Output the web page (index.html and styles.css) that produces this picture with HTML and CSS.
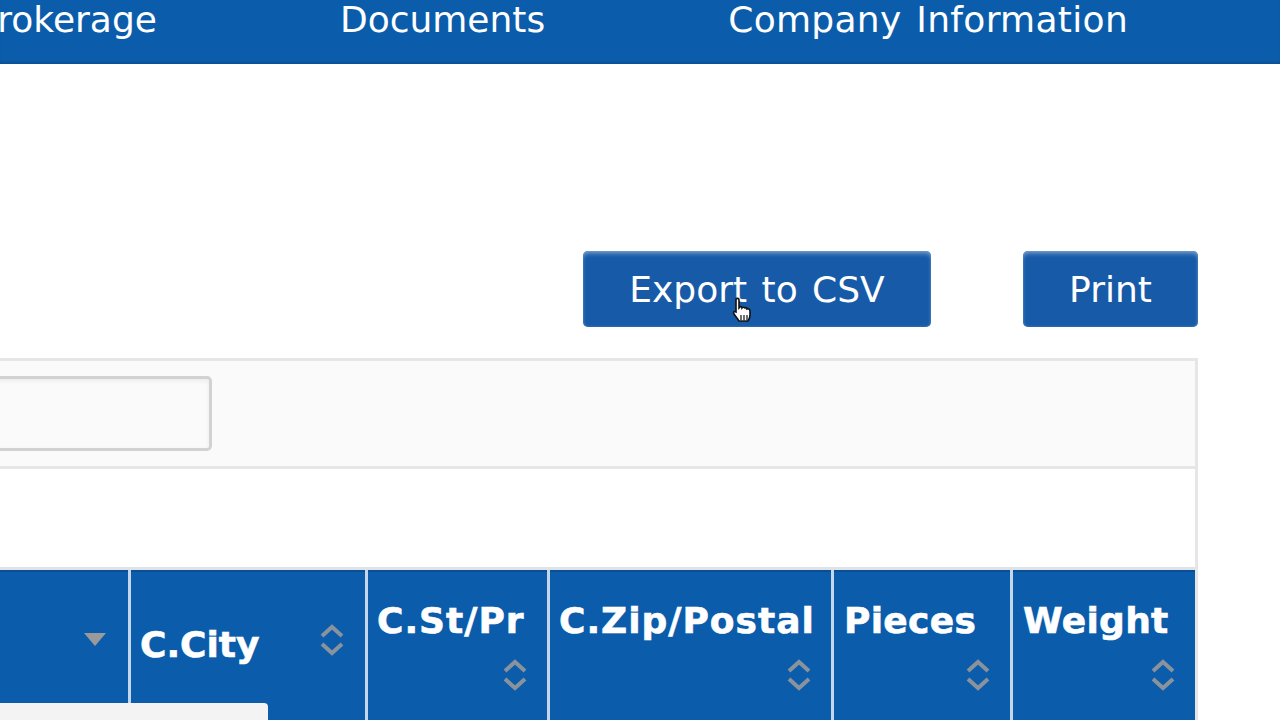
FILE: index.html
```html
<!DOCTYPE html>
<html lang="en">

<head>
    <meta charset="UTF-8">
    <title>Shipments</title>
    <link rel="stylesheet" href="styles.css">
</head>

<body>
    <nav class="topnav">
        <a class="nav-link">Brokerage</a>
        <a class="nav-link">Documents</a>
        <a class="nav-link nav-company">Company Information</a>
    </nav>

    <div class="actions">
        <a class="btn btn-export">Export to CSV</a>
        <a class="btn btn-print">Print</a>
    </div>

    <div class="panel">
        <div class="filter-row">
            <div class="filter-input"></div>
        </div>
        <div class="spacer-row"></div>
        <div class="head-row">
            <div class="cell cell-first">
                <svg class="caret" width="24" height="14" viewBox="0 0 24 14"><path d="M1 1h22L12 14z"/></svg>
            </div>
            <div class="cell cell-city">
                <span class="label">C.City</span>
                <svg class="sort" width="24" height="32" viewBox="0 0 24 32"><path d="M2 12 12 3l10 9M2 20l10 9 10-9"/></svg>
            </div>
            <div class="cell">
                <span class="label label-wide">C.St/Pr</span>
                <svg class="sort" width="24" height="32" viewBox="0 0 24 32"><path d="M2 12 12 3l10 9M2 20l10 9 10-9"/></svg>
            </div>
            <div class="cell">
                <span class="label label-wide">C.Zip/Postal</span>
                <svg class="sort" width="24" height="32" viewBox="0 0 24 32"><path d="M2 12 12 3l10 9M2 20l10 9 10-9"/></svg>
            </div>
            <div class="cell cell-num">
                <span class="label">Pieces</span>
                <svg class="sort" width="24" height="32" viewBox="0 0 24 32"><path d="M2 12 12 3l10 9M2 20l10 9 10-9"/></svg>
            </div>
            <div class="cell cell-num">
                <span class="label">Weight</span>
                <svg class="sort" width="24" height="32" viewBox="0 0 24 32"><path d="M2 12 12 3l10 9M2 20l10 9 10-9"/></svg>
            </div>
            <div class="first-row-edge"></div>
        </div>
    </div>

    <svg class="cursor" width="20" height="26" viewBox="0 0 20 26">
        <path d="M4 2c1-1 3-1 3 1v8l1-1c1-1 2 0 2 1 1-1 2-1 3 0 1-1 2 0 2 1 1-.5 3 0 3 2v4c0 3-1 4-2 6H7c-1-2-3-4-5-7-1-2 0-3 2-2V3z" fill="#fff" stroke="#111" stroke-width="1.6"/>
        <path d="M9 18v5M12 18v5M15 18v5" stroke="#111" stroke-width="1.2"/>
    </svg>
</body>

</html>
```

FILE: styles.css
```css
* {
    margin: 0;
    padding: 0;
    box-sizing: border-box;
}

html, body {
    height: 720px;
    overflow: hidden;
}

body {
    background: #fff;
    font-family: "DejaVu Sans", Verdana, sans-serif;
    position: relative;
}

.topnav {
    height: 64px;
    background: #0b5dab;
    box-shadow: inset 0 -3px 3px -1px #0a4f96;
    display: flex;
    justify-content: flex-end;
    gap: 183px;
    padding-right: 152px;
    white-space: nowrap;
}

.nav-link {
    color: #fff;
    font-size: 36px;
    line-height: 40px;
}

.nav-company {
    word-spacing: 3px;
    letter-spacing: 0.3px;
}

.actions {
    display: flex;
    justify-content: flex-end;
    gap: 92px;
    padding-right: 82px;
    margin-top: 187px;
}

.btn {
    height: 76px;
    line-height: 77px;
    text-align: center;
    color: #fff;
    font-size: 36px;
    word-spacing: 3px;
    background: #175aa8;
    border-radius: 5px;
    box-shadow: inset 0 4px 5px -2px #7fa3d0, inset 0 0 3px #4f80bc;
}

.btn-export {
    width: 348px;
}

.btn-print {
    width: 175px;
}

.panel {
    margin: 31px 82px 0 -20px;
    border: solid #e6e6e6;
    border-width: 3px 3px 0 0;
}

.filter-row {
    height: 108px;
    background: #fafafa;
    padding-top: 15px;
    border-bottom: 3px solid #e6e6e6;
}

.filter-input {
    width: 232px;
    height: 75px;
    background: #fafafa;
    border: 3px solid #d2d2d2;
    border-radius: 5px;
    box-shadow: inset 0 2px 4px #ebebeb;
}

.spacer-row {
    height: 101px;
    background: #fff;
    border-bottom: 3px solid #dfe3e8;
}

.head-row {
    display: grid;
    grid-template-columns: 148px 234px 179px 281px 176px 1fr;
    gap: 3px;
    height: 150px;
    background: #c4d6ea;
    position: relative;
}

.cell {
    background: #0b5dab;
    border-top: 2px solid #0a4f96;
    padding: 29px 20px 0 9px;
    display: flex;
    flex-direction: column;
    color: #fff;
}

.cell-num {
    padding-left: 10px;
}

.cell-num .label {
    letter-spacing: 0.3px;
}

.label {
    font-size: 36px;
    font-weight: bold;
    line-height: 40px;
    white-space: nowrap;
    -webkit-text-stroke: 0.6px #fff;
}

.label-wide {
    letter-spacing: 1px;
}

.sort {
    align-self: flex-end;
    margin-top: 18px;
    fill: none;
    stroke: #8a929c;
    stroke-width: 4;
}

.cell-first {
    align-items: flex-end;
    padding: 60px 21px 0 0;
}

.caret {
    fill: #9a9a9a;
}

.cell-city {
    flex-direction: row;
    justify-content: space-between;
    padding: 0 21px 2px 9px;
    align-items: center;
}

.cell-city .sort {
    align-self: center;
    margin: -10px 0 0 0;
}

/* first body row, showing under the header */
.first-row-edge {
    position: absolute;
    left: 0;
    bottom: 0;
    width: 288px;
    height: 17px;
    background: #f3f3f3;
    border-top-right-radius: 4px;
}

.cursor {
    position: absolute;
    left: 732px;
    top: 297px;
}
```
